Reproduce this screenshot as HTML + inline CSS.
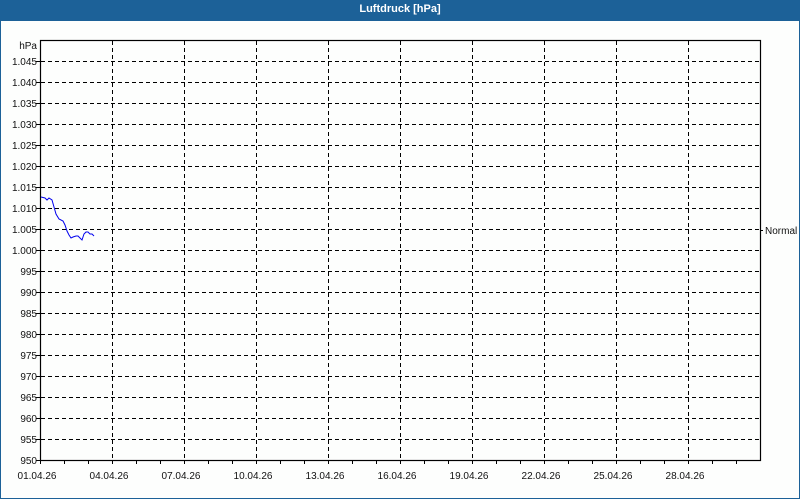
<!DOCTYPE html>
<html><head><meta charset="utf-8"><style>
html,body{margin:0;padding:0;background:#fff}
body{width:800px;height:500px;overflow:hidden;position:relative;font-family:"Liberation Sans",sans-serif}
#bar{position:absolute;left:0;top:0;width:800px;height:21px;background:#1c6198;color:#fff;font-size:11px;font-weight:bold;text-align:center;line-height:18px}
#frame{position:absolute;left:0;top:21px;width:798px;height:477px;border:1px solid #1c6198;border-top:0;background:#fdfefd}
svg{position:absolute;left:0;top:0}
text{font-family:"Liberation Sans",sans-serif;font-size:10px;fill:#111}
</style></head><body>
<div id="bar">Luftdruck [hPa]</div>
<div id="frame"></div>
<svg width="800" height="500" viewBox="0 0 800 500">
<g stroke="#000" stroke-width="1" stroke-dasharray="4,3" fill="none">
<path d="M41 61.5H760M41 82.5H760M41 103.5H760M41 124.5H760M41 145.5H760M41 166.5H760M41 187.5H760M41 208.5H760M41 229.5H760M41 250.5H760M41 271.5H760M41 292.5H760M41 313.5H760M41 334.5H760M41 355.5H760M41 376.5H760M41 397.5H760M41 418.5H760M41 439.5H760"/>
<path d="M112.5 41V460M184.5 41V460M256.5 41V460M328.5 41V460M400.5 41V460M472.5 41V460M544.5 41V460M616.5 41V460M688.5 41V460"/>
</g>
<rect x="40.5" y="40.5" width="720" height="420" fill="none" stroke="#000" stroke-width="1.2"/>
<path d="M36 61.5h5M36 82.5h5M36 103.5h5M36 124.5h5M36 145.5h5M36 166.5h5M36 187.5h5M36 208.5h5M36 229.5h5M36 250.5h5M36 271.5h5M36 292.5h5M36 313.5h5M36 334.5h5M36 355.5h5M36 376.5h5M36 397.5h5M36 418.5h5M36 439.5h5M36 460.5h5M760 230.5h3" stroke="#000"/>
<path d="M40.5 460v4M64.5 460v4M88.5 460v4M112.5 460v4M136.5 460v4M160.5 460v4M184.5 460v4M208.5 460v4M232.5 460v4M256.5 460v4M280.5 460v4M304.5 460v4M328.5 460v4M352.5 460v4M376.5 460v4M400.5 460v4M424.5 460v4M448.5 460v4M472.5 460v4M496.5 460v4M520.5 460v4M544.5 460v4M568.5 460v4M592.5 460v4M616.5 460v4M640.5 460v4M664.5 460v4M688.5 460v4M712.5 460v4M736.5 460v4" stroke="#000"/>
<polyline fill="none" stroke="#0000ee" stroke-width="1" points="41,197 45,198 47,200 49,198 52,200 54,207 56,214 59,219 63,221 65,225 67,231 69,235 71,238 73,237 76,236 78,236 80,238 82,240 83,237 84,234 86,232 88,232 90,234 92,234 94,236"/>
<g text-anchor="end">
<text x="37" y="49">hPa</text>
<text x="37" y="65">1.045</text><text x="37" y="86">1.040</text><text x="37" y="107">1.035</text><text x="37" y="128">1.030</text><text x="37" y="149">1.025</text><text x="37" y="170">1.020</text><text x="37" y="191">1.015</text><text x="37" y="212">1.010</text><text x="37" y="233">1.005</text><text x="37" y="254">1.000</text><text x="37" y="275">995</text><text x="37" y="296">990</text><text x="37" y="317">985</text><text x="37" y="338">980</text><text x="37" y="359">975</text><text x="37" y="380">970</text><text x="37" y="401">965</text><text x="37" y="422">960</text><text x="37" y="443">955</text><text x="37" y="464">950</text>
</g>
<text x="765" y="234">Normal</text>
<g text-anchor="middle">
<text x="37" y="479">01.04.26</text><text x="109" y="479">04.04.26</text><text x="181" y="479">07.04.26</text><text x="253" y="479">10.04.26</text><text x="325" y="479">13.04.26</text><text x="397" y="479">16.04.26</text><text x="469" y="479">19.04.26</text><text x="541" y="479">22.04.26</text><text x="613" y="479">25.04.26</text><text x="685" y="479">28.04.26</text>
</g>
</svg>
</body></html>
